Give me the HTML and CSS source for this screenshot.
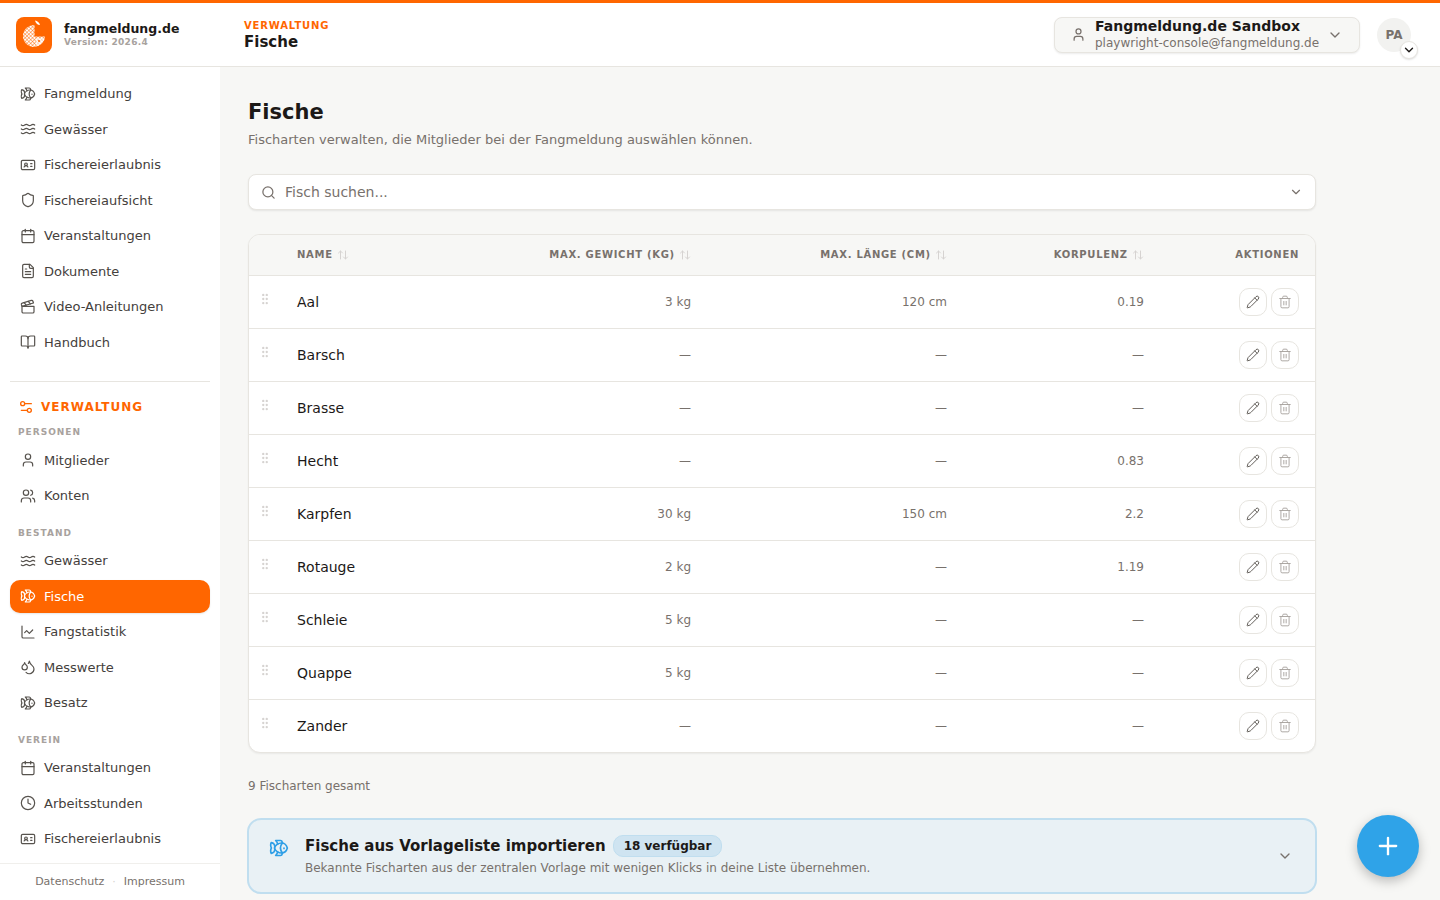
FILE: index.html
```html
<!DOCTYPE html>
<html lang="de">
    <head>
        <meta charset="UTF-8" />
        <meta name="viewport" content="width=device-width, initial-scale=1.0" />
        <title>Fische - fangmeldung.de</title>
        <link rel="stylesheet" href="styles.css">
    </head>
    <body>
        <svg class="sprite" aria-hidden="true">
            <defs>
                <symbol id="i-fish" viewBox="0 0 24 24"><path d="M6.5 12c.94-3.46 4.94-6 8.5-6 3.56 0 6.06 2.54 7 6-.94 3.47-3.44 6-7 6s-7.56-2.53-8.5-6Z"/><path d="M18 12v.5"/><path d="M16 17.93a9.77 9.77 0 0 1 0-11.86"/><path d="M7 10.67C7 8 5.58 5.97 2.73 5.5c-1 1.5-1 5 .23 6.5-1.24 1.5-1.24 5-.23 6.5C5.58 18.03 7 16 7 13.33"/><path d="M10.46 7.26C10.2 5.88 9.17 4.24 8 3h5.8a2 2 0 0 1 1.98 1.67l.23 1.4"/><path d="m16.01 17.93-.23 1.4A2 2 0 0 1 13.8 21H8c1.17-1.24 2.2-2.88 2.46-4.26"/></symbol>
                <symbol id="i-waves" viewBox="0 0 24 24"><path d="M2 6c.6.5 1.2 1 2.5 1C7 7 7 5 9.5 5c2.6 0 2.4 2 5 2 2.5 0 2.5-2 5-2 1.3 0 1.9.5 2.5 1"/><path d="M2 12c.6.5 1.2 1 2.5 1 2.5 0 2.5-2 5-2 2.6 0 2.4 2 5 2 2.5 0 2.5-2 5-2 1.3 0 1.9.5 2.5 1"/><path d="M2 18c.6.5 1.2 1 2.5 1 2.5 0 2.5-2 5-2 2.6 0 2.4 2 5 2 2.5 0 2.5-2 5-2 1.3 0 1.9.5 2.5 1"/></symbol>
                <symbol id="i-card" viewBox="0 0 24 24"><path d="M16 10h2"/><path d="M16 14h2"/><path d="M6.17 15a3 3 0 0 1 5.66 0"/><circle cx="9" cy="11" r="2"/><rect x="2" y="5" width="20" height="14" rx="2"/></symbol>
                <symbol id="i-shield" viewBox="0 0 24 24"><path d="M20 13c0 5-3.5 7.5-7.66 8.95a1 1 0 0 1-.67-.01C7.5 20.5 4 18 4 13V6a1 1 0 0 1 1-1c2 0 4.5-1.2 6.24-2.72a1.17 1.17 0 0 1 1.52 0C14.51 3.81 17 5 19 5a1 1 0 0 1 1 1z"/></symbol>
                <symbol id="i-calendar" viewBox="0 0 24 24"><path d="M8 2v4"/><path d="M16 2v4"/><rect x="3" y="4" width="18" height="18" rx="2"/><path d="M3 10h18"/></symbol>
                <symbol id="i-file" viewBox="0 0 24 24"><path d="M15 2H6a2 2 0 0 0-2 2v16a2 2 0 0 0 2 2h12a2 2 0 0 0 2-2V7Z"/><path d="M14 2v4a2 2 0 0 0 2 2h4"/><path d="M10 9H8"/><path d="M16 13H8"/><path d="M16 17H8"/></symbol>
                <symbol id="i-clapper" viewBox="0 0 24 24"><path d="M20.2 6 3 11l-.9-2.4c-.3-1.1.3-2.2 1.3-2.5l13.5-4c1.1-.3 2.2.3 2.5 1.3Z"/><path d="m6.2 5.3 3.1 3.9"/><path d="m12.4 3.4 3.1 4"/><path d="M3 11h18v8a2 2 0 0 1-2 2H5a2 2 0 0 1-2-2Z"/></symbol>
                <symbol id="i-book" viewBox="0 0 24 24"><path d="M12 7v14"/><path d="M3 18a1 1 0 0 1-1-1V4a1 1 0 0 1 1-1h5a4 4 0 0 1 4 4 4 4 0 0 1 4-4h5a1 1 0 0 1 1 1v13a1 1 0 0 1-1 1h-6a3 3 0 0 0-3 3 3 3 0 0 0-3-3z"/></symbol>
                <symbol id="i-sliders" viewBox="0 0 24 24"><path d="M20 7h-9"/><path d="M14 17H5"/><circle cx="17" cy="17" r="3"/><circle cx="7" cy="7" r="3"/></symbol>
                <symbol id="i-user" viewBox="0 0 24 24"><path d="M19 21v-2a4 4 0 0 0-4-4H9a4 4 0 0 0-4 4v2"/><circle cx="12" cy="7" r="4"/></symbol>
                <symbol id="i-users" viewBox="0 0 24 24"><path d="M16 21v-2a4 4 0 0 0-4-4H6a4 4 0 0 0-4 4v2"/><circle cx="9" cy="7" r="4"/><path d="M22 21v-2a4 4 0 0 0-3-3.87"/><path d="M16 3.13a4 4 0 0 1 0 7.75"/></symbol>
                <symbol id="i-chart" viewBox="0 0 24 24"><path d="M3 3v16a2 2 0 0 0 2 2h16"/><path d="m19 9-5 5-4-4-3 3"/></symbol>
                <symbol id="i-drops" viewBox="0 0 24 24"><path d="M7 16.3c2.2 0 4-1.83 4-4.05 0-1.16-.57-2.26-1.71-3.19S7.29 6.75 7 5.3c-.29 1.45-1.14 2.84-2.29 3.76S3 11.1 3 12.25c0 2.22 1.8 4.05 4 4.05z"/><path d="M12.56 6.6A10.97 10.97 0 0 0 14 3.02c.5 2.5 2 4.9 4 6.5s3 3.5 3 5.5a6.98 6.98 0 0 1-11.91 4.97"/></symbol>
                <symbol id="i-clock" viewBox="0 0 24 24"><circle cx="12" cy="12" r="10"/><path d="M12 6v6l4 2"/></symbol>
                <symbol id="i-search" viewBox="0 0 24 24"><path d="m21 21-4.34-4.34"/><circle cx="11" cy="11" r="8"/></symbol>
                <symbol id="i-chevron" viewBox="0 0 24 24"><path d="m6 9 6 6 6-6"/></symbol>
                <symbol id="i-pencil" viewBox="0 0 24 24"><path d="M21.174 6.812a1 1 0 0 0-3.986-3.987L3.842 16.174a2 2 0 0 0-.5.83l-1.321 4.352a.5.5 0 0 0 .623.622l4.353-1.32a2 2 0 0 0 .83-.497z"/><path d="m15 5 4 4"/></symbol>
                <symbol id="i-trash" viewBox="0 0 24 24"><path d="M10 11v6"/><path d="M14 11v6"/><path d="M19 6v14a2 2 0 0 1-2 2H7a2 2 0 0 1-2-2V6"/><path d="M3 6h18"/><path d="M8 6V4a2 2 0 0 1 2-2h4a2 2 0 0 1 2 2v2"/></symbol>
                <symbol id="i-sort" viewBox="0 0 24 24"><path d="m21 16-4 4-4-4"/><path d="M17 20V4"/><path d="m3 8 4-4 4 4"/><path d="M7 4v16"/></symbol>
                <symbol id="i-grip" viewBox="0 0 24 24"><circle cx="9" cy="5" r="1"/><circle cx="9" cy="12" r="1"/><circle cx="9" cy="19" r="1"/><circle cx="15" cy="5" r="1"/><circle cx="15" cy="12" r="1"/><circle cx="15" cy="19" r="1"/></symbol>
                <symbol id="i-plus" viewBox="0 0 24 24"><path d="M5 12h14"/><path d="M12 5v14"/></symbol>
            </defs>
        </svg>

        <header class="topbar">
            <div class="brand">
                <svg class="brand-logo" viewBox="0 0 36 36">
                    <defs>
                        <pattern id="net" width="2.6" height="2.6" patternUnits="userSpaceOnUse" patternTransform="rotate(45)">
                            <rect width="2.6" height="2.6" fill="#fff"/>
                            <path d="M0 0h2.6M0 0v2.6" stroke="#ff6600" stroke-width="0.9"/>
                        </pattern>
                    </defs>
                    <rect width="36" height="36" rx="8" fill="#ff6600"/>
                    <path d="M18.5 8a11 11 0 1 0 10.5 11.5H18.5z" fill="url(#net)"/>
                    <path d="M20 21h8.2a9.6 9.6 0 0 1-8.2 8z" fill="#fff" opacity="0.55"/>
                    <circle cx="23" cy="24" r="1" fill="#ff6600"/>
                    <path d="M19 3.5c2.4.4 4.4 1.9 5 4.6-2.5-.2-4.4-1.9-5-4.6z" fill="#fff"/>
                </svg>
                <div>
                    <div class="brand-name">fangmeldung.de</div>
                    <div class="brand-version">Version: 2026.4</div>
                </div>
            </div>
            <div class="crumb">
                <div class="crumb-section">VERWALTUNG</div>
                <div class="crumb-title">Fische</div>
            </div>
            <button class="org-switch">
                <svg class="icon org-user"><use href="#i-user"/></svg>
                <span class="org-text">
                    <span class="org-name">Fangmeldung.de Sandbox</span>
                    <span class="org-mail">playwright-console@fangmeldung.de</span>
                </span>
                <svg class="icon org-chevron"><use href="#i-chevron"/></svg>
            </button>
            <div class="avatar">
                PA
                <span class="avatar-toggle"><svg class="icon"><use href="#i-chevron"/></svg></span>
            </div>
        </header>

        <div class="layout">
            <aside class="sidebar">
                <nav class="nav">
                    <a class="nav-item"><svg class="icon"><use href="#i-fish"/></svg>Fangmeldung</a>
                    <a class="nav-item"><svg class="icon"><use href="#i-waves"/></svg>Gewässer</a>
                    <a class="nav-item"><svg class="icon"><use href="#i-card"/></svg>Fischereierlaubnis</a>
                    <a class="nav-item"><svg class="icon"><use href="#i-shield"/></svg>Fischereiaufsicht</a>
                    <a class="nav-item"><svg class="icon"><use href="#i-calendar"/></svg>Veranstaltungen</a>
                    <a class="nav-item"><svg class="icon"><use href="#i-file"/></svg>Dokumente</a>
                    <a class="nav-item"><svg class="icon"><use href="#i-clapper"/></svg>Video-Anleitungen</a>
                    <a class="nav-item"><svg class="icon"><use href="#i-book"/></svg>Handbuch</a>

                    <div class="nav-divider"></div>
                    <div class="nav-admin"><svg class="icon"><use href="#i-sliders"/></svg>VERWALTUNG</div>

                    <div class="nav-group nav-group-first">PERSONEN</div>
                    <a class="nav-item"><svg class="icon"><use href="#i-user"/></svg>Mitglieder</a>
                    <a class="nav-item"><svg class="icon"><use href="#i-users"/></svg>Konten</a>

                    <div class="nav-group">BESTAND</div>
                    <a class="nav-item"><svg class="icon"><use href="#i-waves"/></svg>Gewässer</a>
                    <a class="nav-item active"><svg class="icon"><use href="#i-fish"/></svg>Fische</a>
                    <a class="nav-item"><svg class="icon"><use href="#i-chart"/></svg>Fangstatistik</a>
                    <a class="nav-item"><svg class="icon"><use href="#i-drops"/></svg>Messwerte</a>
                    <a class="nav-item"><svg class="icon"><use href="#i-fish"/></svg>Besatz</a>

                    <div class="nav-group">VEREIN</div>
                    <a class="nav-item"><svg class="icon"><use href="#i-calendar"/></svg>Veranstaltungen</a>
                    <a class="nav-item"><svg class="icon"><use href="#i-clock"/></svg>Arbeitsstunden</a>
                    <a class="nav-item"><svg class="icon"><use href="#i-card"/></svg>Fischereierlaubnis</a>
                </nav>
                <footer class="sidebar-footer">
                    <a>Datenschutz</a><span class="dot">·</span><a>Impressum</a>
                </footer>
            </aside>

            <main class="content">
                <h1 class="page-title">Fische</h1>
                <p class="page-sub">Fischarten verwalten, die Mitglieder bei der Fangmeldung auswählen können.</p>

                <div class="search">
                    <svg class="icon search-icon"><use href="#i-search"/></svg>
                    <span class="search-text">Fisch suchen...</span>
                    <svg class="icon search-chevron"><use href="#i-chevron"/></svg>
                </div>

                <div class="table-card">
                    <table class="fish-table">
                        <colgroup>
                            <col class="col-grip">
                            <col class="col-name">
                            <col class="col-weight">
                            <col class="col-length">
                            <col class="col-body">
                            <col>
                        </colgroup>
                        <thead>
                            <tr>
                                <th></th>
                                <th class="left">NAME <svg class="icon sort"><use href="#i-sort"/></svg></th>
                                <th>MAX. GEWICHT (KG) <svg class="icon sort"><use href="#i-sort"/></svg></th>
                                <th>MAX. LÄNGE (CM) <svg class="icon sort"><use href="#i-sort"/></svg></th>
                                <th>KORPULENZ <svg class="icon sort"><use href="#i-sort"/></svg></th>
                                <th class="actions">AKTIONEN</th>
                            </tr>
                        </thead>
                        <tbody>
                            <tr>
                                <td class="grip"><svg class="icon"><use href="#i-grip"/></svg></td>
                                <td class="name">Aal</td><td>3 kg</td><td>120 cm</td><td>0.19</td>
                                <td class="actions"><span class="btn-row"><button class="btn-icon"><svg class="icon"><use href="#i-pencil"/></svg></button><button class="btn-icon btn-del"><svg class="icon"><use href="#i-trash"/></svg></button></span></td>
                            </tr>
                            <tr>
                                <td class="grip"><svg class="icon"><use href="#i-grip"/></svg></td>
                                <td class="name">Barsch</td><td>—</td><td>—</td><td>—</td>
                                <td class="actions"><span class="btn-row"><button class="btn-icon"><svg class="icon"><use href="#i-pencil"/></svg></button><button class="btn-icon btn-del"><svg class="icon"><use href="#i-trash"/></svg></button></span></td>
                            </tr>
                            <tr>
                                <td class="grip"><svg class="icon"><use href="#i-grip"/></svg></td>
                                <td class="name">Brasse</td><td>—</td><td>—</td><td>—</td>
                                <td class="actions"><span class="btn-row"><button class="btn-icon"><svg class="icon"><use href="#i-pencil"/></svg></button><button class="btn-icon btn-del"><svg class="icon"><use href="#i-trash"/></svg></button></span></td>
                            </tr>
                            <tr>
                                <td class="grip"><svg class="icon"><use href="#i-grip"/></svg></td>
                                <td class="name">Hecht</td><td>—</td><td>—</td><td>0.83</td>
                                <td class="actions"><span class="btn-row"><button class="btn-icon"><svg class="icon"><use href="#i-pencil"/></svg></button><button class="btn-icon btn-del"><svg class="icon"><use href="#i-trash"/></svg></button></span></td>
                            </tr>
                            <tr>
                                <td class="grip"><svg class="icon"><use href="#i-grip"/></svg></td>
                                <td class="name">Karpfen</td><td>30 kg</td><td>150 cm</td><td>2.2</td>
                                <td class="actions"><span class="btn-row"><button class="btn-icon"><svg class="icon"><use href="#i-pencil"/></svg></button><button class="btn-icon btn-del"><svg class="icon"><use href="#i-trash"/></svg></button></span></td>
                            </tr>
                            <tr>
                                <td class="grip"><svg class="icon"><use href="#i-grip"/></svg></td>
                                <td class="name">Rotauge</td><td>2 kg</td><td>—</td><td>1.19</td>
                                <td class="actions"><span class="btn-row"><button class="btn-icon"><svg class="icon"><use href="#i-pencil"/></svg></button><button class="btn-icon btn-del"><svg class="icon"><use href="#i-trash"/></svg></button></span></td>
                            </tr>
                            <tr>
                                <td class="grip"><svg class="icon"><use href="#i-grip"/></svg></td>
                                <td class="name">Schleie</td><td>5 kg</td><td>—</td><td>—</td>
                                <td class="actions"><span class="btn-row"><button class="btn-icon"><svg class="icon"><use href="#i-pencil"/></svg></button><button class="btn-icon btn-del"><svg class="icon"><use href="#i-trash"/></svg></button></span></td>
                            </tr>
                            <tr>
                                <td class="grip"><svg class="icon"><use href="#i-grip"/></svg></td>
                                <td class="name">Quappe</td><td>5 kg</td><td>—</td><td>—</td>
                                <td class="actions"><span class="btn-row"><button class="btn-icon"><svg class="icon"><use href="#i-pencil"/></svg></button><button class="btn-icon btn-del"><svg class="icon"><use href="#i-trash"/></svg></button></span></td>
                            </tr>
                            <tr>
                                <td class="grip"><svg class="icon"><use href="#i-grip"/></svg></td>
                                <td class="name">Zander</td><td>—</td><td>—</td><td>—</td>
                                <td class="actions"><span class="btn-row"><button class="btn-icon"><svg class="icon"><use href="#i-pencil"/></svg></button><button class="btn-icon btn-del"><svg class="icon"><use href="#i-trash"/></svg></button></span></td>
                            </tr>
                        </tbody>
                    </table>
                </div>

                <p class="table-count">9 Fischarten gesamt</p>

                <section class="import">
                    <svg class="icon import-fish"><use href="#i-fish"/></svg>
                    <div class="import-text">
                        <div class="import-head">
                            <span class="import-title">Fische aus Vorlageliste importieren</span>
                            <span class="badge">18 verfügbar</span>
                        </div>
                        <div class="import-desc">Bekannte Fischarten aus der zentralen Vorlage mit wenigen Klicks in deine Liste übernehmen.</div>
                    </div>
                    <svg class="icon import-chevron"><use href="#i-chevron"/></svg>
                </section>
            </main>
        </div>

        <button class="fab"><svg class="icon"><use href="#i-plus"/></svg></button>
    </body>
</html>
```

FILE: styles.css
```css
* {
    box-sizing: border-box;
}

html,
body {
    height: 100%;
}

body {
    display: flex;
    flex-direction: column;
    height: 100vh;
    margin: 0;
    overflow: hidden;
    background-color: #f7f7f5;
    border-top: 3px solid #ff6600;
    font-family: "DejaVu Sans", sans-serif;
    color: #1c1917;
}

.sprite {
    display: none;
}

.icon {
    width: 16px;
    height: 16px;
    flex: none;
    fill: none;
    stroke: currentColor;
    stroke-width: 2;
    stroke-linecap: round;
    stroke-linejoin: round;
}

/* top bar */
.topbar {
    display: flex;
    align-items: center;
    flex: none;
    height: 64px;
    padding: 0 21px 0 16px;
    background-color: #fff;
    border-bottom: 1px solid #e7e5e0;
}

.brand {
    display: flex;
    align-items: center;
    gap: 12px;
    width: 228px;
}

.brand-logo {
    width: 36px;
    height: 36px;
    flex: none;
}

.brand-name {
    font-size: 12.5px;
    font-weight: 700;
    line-height: 16px;
}

.brand-version {
    font-size: 9px;
    font-weight: 700;
    line-height: 11px;
    letter-spacing: 0.3px;
    color: #a8a29e;
}

.crumb {
    flex: 1;
    padding-top: 2px;
}

.crumb-section {
    font-size: 10px;
    font-weight: 700;
    line-height: 12px;
    letter-spacing: 0.85px;
    color: #ff6600;
}

.crumb-title {
    font-size: 15px;
    font-weight: 700;
    line-height: 20px;
}

.org-switch {
    display: flex;
    align-items: center;
    width: 306px;
    height: 36px;
    padding: 0 16px 0 16px;
    background-color: #f7f7f5;
    border: 1px solid #e7e5e0;
    border-radius: 8px;
    box-shadow: 0 1px 2px rgba(0, 0, 0, 0.08);
    font-family: inherit;
    text-align: left;
    color: #1c1917;
}

.org-user {
    width: 15px;
    height: 15px;
    margin-right: 9px;
    color: #78716c;
}

.org-text {
    display: flex;
    flex-direction: column;
    flex: 1;
    padding-bottom: 1px;
}

.org-name {
    margin-bottom: 1px;
    font-size: 14px;
    font-weight: 700;
    line-height: 17px;
}

.org-mail {
    font-size: 12px;
    line-height: 15px;
    color: #78716c;
}

.org-chevron {
    color: #78716c;
}

.avatar {
    position: relative;
    display: flex;
    align-items: center;
    justify-content: center;
    width: 34px;
    height: 34px;
    margin-left: 17px;
    margin-right: 8px;
    background-color: #f2f2f0;
    border-radius: 50%;
    font-size: 12px;
    font-weight: 700;
    color: #78716c;
}

.avatar-toggle {
    position: absolute;
    right: -7px;
    bottom: -7px;
    display: flex;
    align-items: center;
    justify-content: center;
    width: 18px;
    height: 18px;
    background-color: #fff;
    border: 1px solid #e7e5e0;
    border-radius: 50%;
    box-shadow: 0 1px 2px rgba(0, 0, 0, 0.12);
    color: #1c1917;
}

.avatar-toggle .icon {
    width: 14px;
    height: 14px;
    stroke-width: 2.4;
}

/* layout */
.layout {
    display: flex;
    flex: 1;
    min-height: 0;
}

.sidebar {
    display: flex;
    flex-direction: column;
    flex: none;
    width: 220px;
    background-color: #fff;
}

.nav {
    display: flex;
    flex-direction: column;
    flex: 1;
    gap: 2px;
    padding: 10px 10px 0;
}

.nav-item {
    display: flex;
    align-items: center;
    gap: 8px;
    height: 33.5px;
    padding-left: 10px;
    border-radius: 10px;
    font-size: 13px;
    color: #44403c;
}

.nav-item .icon {
    color: #57534e;
    stroke-width: 1.8;
}

.nav-item.active {
    background-color: #ff6600;
    box-shadow: 0 1px 2px rgba(0, 0, 0, 0.1);
    color: #fff;
}

.nav-item.active .icon {
    color: #fff;
}

.nav-divider {
    height: 1px;
    margin-top: 20px;
    background-color: #e7e5e0;
}

.nav-admin {
    display: flex;
    align-items: center;
    gap: 7px;
    margin-top: 15px;
    padding-left: 8px;
    font-size: 12px;
    font-weight: 700;
    line-height: 16px;
    letter-spacing: 1px;
    color: #ff6600;
}

.nav-group {
    margin-top: 12.5px;
    padding: 0 8px 3px;
    font-size: 9px;
    font-weight: 700;
    line-height: 12px;
    letter-spacing: 1px;
    color: #a8a29e;
}

.nav-group-first {
    margin-top: 8.5px;
    padding-bottom: 4px;
}

.sidebar-footer {
    display: flex;
    justify-content: center;
    align-items: center;
    flex: none;
    height: 37px;
    padding-bottom: 1px;
    border-top: 1px solid #f0efec;
    font-size: 11px;
    color: #78716c;
}

.dot {
    margin: 0 8px;
    color: #d6d3d1;
}

/* main */
.content {
    flex: 1;
    min-width: 0;
    padding: 30px 124px 0 28px;
}

.page-title {
    margin: 0;
    font-size: 21px;
    font-weight: 700;
    line-height: 30px;
}

.page-sub {
    margin: 4px 0 0;
    font-size: 13px;
    line-height: 18px;
    color: #78716c;
}

.search {
    display: flex;
    align-items: center;
    height: 36px;
    margin-top: 25px;
    padding: 0 12px;
    background-color: #fff;
    border: 1px solid #e7e5e0;
    border-radius: 8px;
    box-shadow: 0 1px 2px rgba(0, 0, 0, 0.08);
}

.search-icon {
    width: 15px;
    height: 15px;
    color: #78716c;
}

.search-text {
    flex: 1;
    margin-left: 9px;
    font-size: 14px;
    color: #78716c;
}

.search-chevron {
    width: 14px;
    height: 14px;
    color: #78716c;
}

.table-card {
    margin-top: 24px;
    background-color: #fff;
    border: 1px solid #e7e5e0;
    border-radius: 12px;
    box-shadow: 0 1px 2px rgba(0, 0, 0, 0.06);
    overflow: hidden;
}

.fish-table {
    width: 100%;
    border-collapse: collapse;
    table-layout: fixed;
}

.col-grip {
    width: 36px;
}

.col-name {
    width: 160px;
}

.col-weight {
    width: 258px;
}

.col-length {
    width: 256px;
}

.col-body {
    width: 197px;
}

.fish-table th {
    height: 40px;
    padding: 0 12px;
    background-color: #f7f7f5;
    border-bottom: 1px solid #e7e5e0;
    font-size: 10px;
    font-weight: 700;
    letter-spacing: 0.7px;
    text-align: right;
    white-space: nowrap;
    color: #78716c;
}

.fish-table th.left {
    text-align: left;
}

.sort {
    width: 12px;
    height: 12px;
    vertical-align: -3px;
    color: #d6d3d1;
}

.fish-table td {
    height: 53px;
    padding: 0 12px;
    border-bottom: 1px solid #e7e5e0;
    font-size: 12px;
    text-align: right;
    color: #78716c;
}

.fish-table tr:last-child td {
    border-bottom: 0;
}

.fish-table td.name {
    font-size: 14px;
    text-align: left;
    color: #1c1917;
}

.fish-table td.grip {
    padding: 0 0 2px 9px;
    text-align: left;
    color: #d6d3d1;
}

.grip .icon {
    width: 14px;
    height: 14px;
    fill: currentColor;
}

.fish-table th.actions,
.fish-table td.actions {
    padding-right: 16px;
}

.btn-row {
    display: inline-flex;
    gap: 4px;
    vertical-align: middle;
}

.btn-icon {
    display: flex;
    align-items: center;
    justify-content: center;
    width: 28px;
    height: 28px;
    padding: 0;
    background-color: #fff;
    border: 1px solid #e7e5e0;
    border-radius: 10px;
    color: #57534e;
}

.btn-icon .icon {
    width: 14px;
    height: 14px;
    stroke-width: 1.6;
}

.btn-del {
    color: #a8a29e;
}

.table-count {
    margin: 25px 0 0;
    font-size: 12px;
    line-height: 16px;
    color: #78716c;
}

.import {
    display: flex;
    align-items: center;
    height: 76px;
    margin: 24px -1px 0;
    padding: 0 22px 0 20px;
    background-color: #e9f1f5;
    border: 2px solid #c0deef;
    border-radius: 14px;
}

.import-fish {
    width: 20px;
    height: 20px;
    margin-right: 16px;
    margin-bottom: 16px;
    color: #2f9fe6;
}

.import-text {
    flex: 1;
    margin-top: -2px;
}

.import-head {
    display: flex;
    align-items: center;
    gap: 7px;
}

.import-title {
    font-size: 15px;
    font-weight: 700;
    line-height: 22px;
}

.badge {
    padding: 0 10px;
    background-color: #cfe4f1;
    border: 1px solid #c0deef;
    border-radius: 10px;
    font-size: 12px;
    font-weight: 700;
    line-height: 20px;
}

.import-desc {
    margin-top: 3px;
    font-size: 12px;
    line-height: 16px;
    color: #78716c;
}

.import-chevron {
    color: #78716c;
}

.fab {
    position: absolute;
    left: 1357px;
    top: 815px;
    display: flex;
    align-items: center;
    justify-content: center;
    width: 62px;
    height: 62px;
    padding: 0;
    background-color: #2fa3e8;
    border: 0;
    border-radius: 50%;
    box-shadow: 0 4px 12px rgba(0, 0, 0, 0.25);
    color: #fff;
}

.fab .icon {
    width: 28px;
    height: 28px;
}
```
